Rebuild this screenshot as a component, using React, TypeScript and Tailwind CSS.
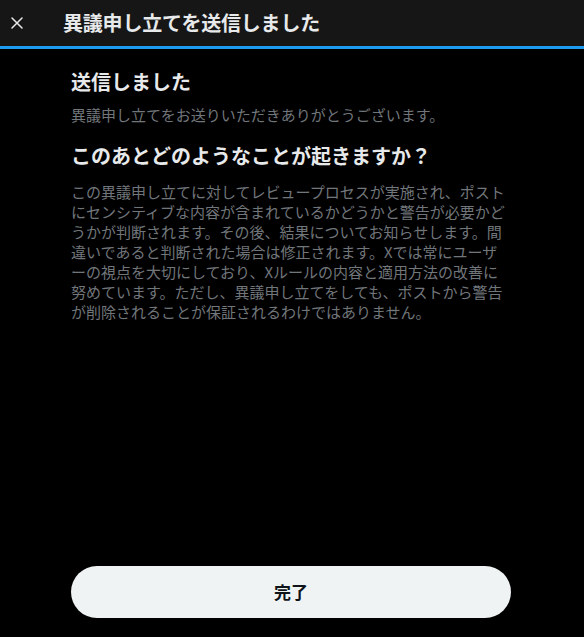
import React from "react";

const lines = [
  "この異議申し立てに対してレビュープロセスが実施され、ポスト",
  "にセンシティブな内容が含まれているかどうかと警告が必要かど",
  "うかが判断されます。その後、結果についてお知らせします。間",
  "違いであると判断された場合は修正されます。Xでは常にユーザ",
  "ーの視点を大切にしており、Xルールの内容と適用方法の改善に",
  "努めています。ただし、異議申し立てをしても、ポストから警告",
  "が削除されることが保証されるわけではありません。",
];

export default function App() {
  return (
    <div
      className="w-[584px] h-[637px] bg-black flex flex-col overflow-hidden"
      style={{ fontFamily: '"Noto Sans CJK JP", "Noto Sans", sans-serif' }}
      lang="ja"
    >
      {/* header bar */}
      <div className="h-[49px] shrink-0 bg-[#161616] border-b-[3px] border-[#1d9bf0] flex items-center">
        <button className="w-[34px] h-[38px] flex items-center justify-center text-[#e7e9ea]">
          <svg width="12" height="12" viewBox="0 0 12 12">
            <path d="M1 1 L11 11 M11 1 L1 11" stroke="currentColor" strokeWidth="1.5" strokeLinecap="round" />
          </svg>
        </button>
        <h1 className="ml-[29px] text-[20px] leading-[24px] font-bold text-[#e7e9ea] tracking-[-0.2px]">
          異議申し立てを送信しました
        </h1>
      </div>

      {/* body */}
      <div className="flex-1 flex flex-col ml-[71px] w-[440px]">
        <h2 className="mt-[21px] text-[20px] leading-[24px] font-bold text-[#e7e9ea]">送信しました</h2>
        <p className="mt-[11px] text-[15px] leading-[20px] text-[#71767b]">
          異議申し立てをお送りいただきありがとうございます。
        </p>
        <h2 className="mt-[19px] text-[20px] leading-[24px] font-bold text-[#e7e9ea]">
          このあとどのようなことが起きますか？
        </h2>
        <p className="mt-[14px] text-[15px] leading-[20px] text-[#71767b] whitespace-nowrap">
          {lines.map((l, i) => (
            <span key={i} className="block">
              {l}
            </span>
          ))}
        </p>

        <div className="mt-auto mb-[19px]">
          <button className="w-[440px] h-[52px] rounded-full bg-[#eff3f4] text-[#0f1419] text-[17px] font-bold flex items-center justify-center">
            完了
          </button>
        </div>
      </div>
    </div>
  );
}
